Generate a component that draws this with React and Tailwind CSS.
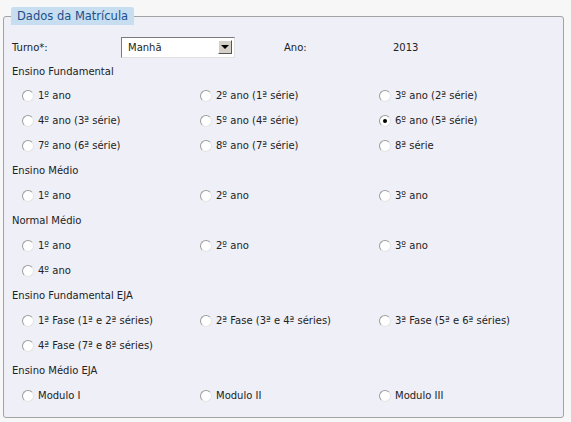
import React, { useState } from 'react';

const sections = [
  {
    title: 'Ensino Fundamental',
    options: [
      '1º ano', '2º ano (1ª série)', '3º ano (2ª série)',
      '4º ano (3ª série)', '5º ano (4ª série)', '6º ano (5ª série)',
      '7º ano (6ª série)', '8º ano (7ª série)', '8ª série',
    ],
  },
  { title: 'Ensino Médio', options: ['1º ano', '2º ano', '3º ano'] },
  { title: 'Normal Médio', options: ['1º ano', '2º ano', '3º ano', '4º ano'] },
  {
    title: 'Ensino Fundamental EJA',
    options: ['1ª Fase (1ª e 2ª séries)', '2ª Fase (3ª e 4ª séries)', '3ª Fase (5ª e 6ª séries)', '4ª Fase (7ª e 8ª séries)'],
  },
  { title: 'Ensino Médio EJA', options: ['Modulo I', 'Modulo II', 'Modulo III'] },
];

function Radio({ checked }) {
  return (
    <span className="w-[12px] h-[12px] rounded-full border border-[#9c9c9c] border-r-[#e4e4e4] border-b-[#e4e4e4] bg-white flex items-center justify-center">
      {checked && <span className="w-[4px] h-[4px] rounded-full bg-black" />}
    </span>
  );
}

export default function App() {
  const [selected, setSelected] = useState('Ensino Fundamental-6º ano (5ª série)');

  return (
    <div className="w-[571px] h-[422px] bg-[#f7f7f7] pt-[7px] text-[10px] text-[#222]" style={{ fontFamily: '"DejaVu Sans", Verdana, sans-serif' }}>
      <fieldset className="ml-[3px] w-[561px] h-[411px] border border-[#a3a3a3] rounded-[3px] bg-[#eeeff7] pl-[8px] pr-2 m-0">
        <legend className="-ml-[1px] px-[6px] h-[18px] leading-[18px] bg-[#c7ddf0] rounded-t-[3px] text-[11.5px] text-[#1c4f8c]">
          Dados da Matrícula
        </legend>

        <div className="flex items-center h-[26px] mt-[9px]">
          <span className="w-[109px]">Turno*:</span>
          <div className="w-[114px] h-[21px] flex items-center bg-white border border-t-[#7a7a7a] border-l-[#7a7a7a] border-b-[#e0e0e0] border-r-[#e0e0e0] pl-[6px] pr-[2px]">
            <span className="flex-1 text-[10px]">Manhã</span>
            <span className="w-[14px] h-[14px] bg-[#d4d0c8] border border-t-white border-l-white border-b-[#555] border-r-[#555] flex items-center justify-center">
              <span className="w-0 h-0 border-l-[4px] border-r-[4px] border-t-[4px] border-l-transparent border-r-transparent border-t-black" />
            </span>
          </div>
          <span className="ml-[49px] w-[109px]">Ano:</span>
          <span>2013</span>
        </div>

        {sections.map((s, i) => (
          <div key={s.title}>
            <div className={`flex items-center ${i === 0 ? 'h-[23px]' : 'h-[25px]'}`}>{s.title}</div>
            <div className="grid grid-cols-[178px_179px_150px] pl-[10px]">
              {s.options.map((o) => {
                const id = s.title + '-' + o;
                return (
                  <label key={id} className="h-[25px] flex items-center gap-[4px] cursor-pointer" onClick={() => setSelected(id)}>
                    <Radio checked={selected === id} />
                    <span>{o}</span>
                  </label>
                );
              })}
            </div>
          </div>
        ))}
      </fieldset>
    </div>
  );
}
